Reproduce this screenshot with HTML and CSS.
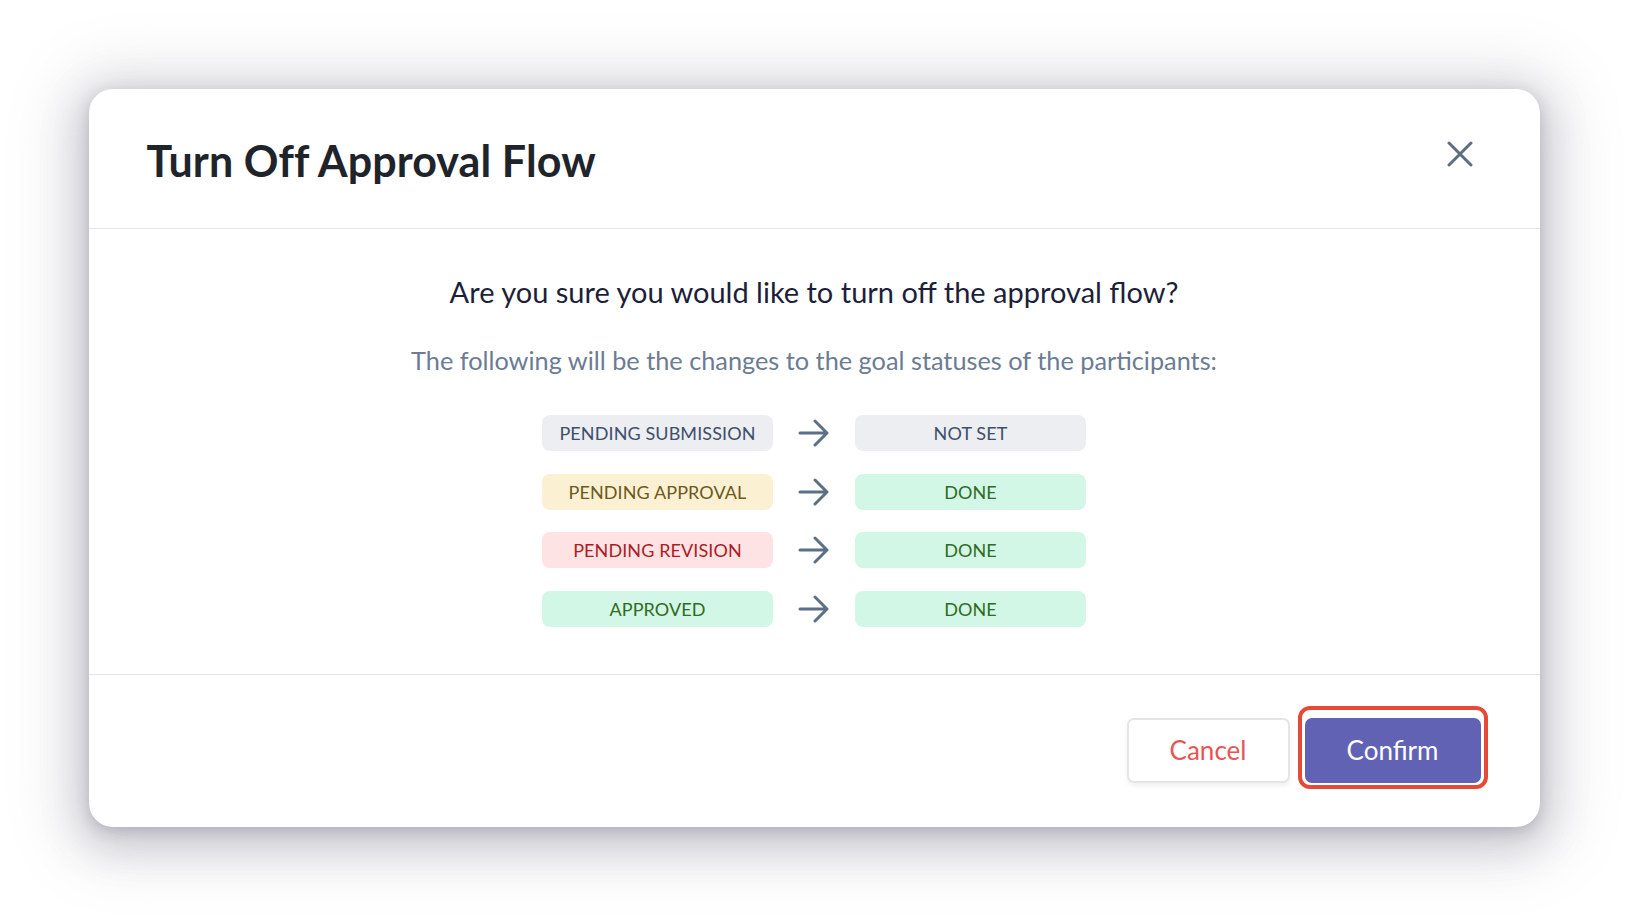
FILE: index.html
```html
<!DOCTYPE html>
<html lang="en">
<head>
<meta charset="utf-8">
<title>Turn Off Approval Flow</title>
<link rel="stylesheet" href="styles.css">
</head>
<body>
<div class="modal" role="dialog" aria-labelledby="modal-title">
  <header class="modal-header">
    <h1 id="modal-title" class="modal-title">Turn Off Approval Flow</h1>
    <button class="close-btn" aria-label="Close">
      <svg width="26" height="26" viewBox="0 0 26 26" aria-hidden="true">
        <path d="M2 2 L24 24 M24 2 L2 24" stroke="#5b6e82" stroke-width="3" stroke-linecap="round" fill="none"/>
      </svg>
    </button>
  </header>
  <section class="modal-body">
    <p class="question">Are you sure you would like to turn off the approval flow?</p>
    <p class="subtitle">The following will be the changes to the goal statuses of the participants:</p>
    <div class="changes">
      <div class="change-row">
        <span class="pill pill-grey">PENDING SUBMISSION</span>
        <svg class="arrow" width="32" height="28" viewBox="0 0 32 28" aria-hidden="true"><path d="M2 14 H29 M17 2 L29 14 L17 26" stroke="#5b6f87" stroke-width="3" stroke-linecap="round" stroke-linejoin="round" fill="none"/></svg>
        <span class="pill pill-grey">NOT SET</span>
      </div>
      <div class="change-row">
        <span class="pill pill-yellow">PENDING APPROVAL</span>
        <svg class="arrow" width="32" height="28" viewBox="0 0 32 28" aria-hidden="true"><path d="M2 14 H29 M17 2 L29 14 L17 26" stroke="#5b6f87" stroke-width="3" stroke-linecap="round" stroke-linejoin="round" fill="none"/></svg>
        <span class="pill pill-green">DONE</span>
      </div>
      <div class="change-row">
        <span class="pill pill-red">PENDING REVISION</span>
        <svg class="arrow" width="32" height="28" viewBox="0 0 32 28" aria-hidden="true"><path d="M2 14 H29 M17 2 L29 14 L17 26" stroke="#5b6f87" stroke-width="3" stroke-linecap="round" stroke-linejoin="round" fill="none"/></svg>
        <span class="pill pill-green">DONE</span>
      </div>
      <div class="change-row">
        <span class="pill pill-green">APPROVED</span>
        <svg class="arrow" width="32" height="28" viewBox="0 0 32 28" aria-hidden="true"><path d="M2 14 H29 M17 2 L29 14 L17 26" stroke="#5b6f87" stroke-width="3" stroke-linecap="round" stroke-linejoin="round" fill="none"/></svg>
        <span class="pill pill-green">DONE</span>
      </div>
    </div>
  </section>
  <footer class="modal-footer">
    <button class="btn btn-cancel">Cancel</button>
    <button class="btn btn-confirm">Confirm</button>
  </footer>
</div>
</body>
</html>
```

FILE: styles.css
```css
* { box-sizing: border-box; }

html, body {
  margin: 0;
  padding: 0;
  height: 100%;
  background: #ffffff;
}

body {
  display: flex;
  align-items: center;
  justify-content: center;
  font-family: "Lato", "Open Sans", "Liberation Sans", sans-serif;
}

.modal {
  width: 1451px;
  height: 738px;
  margin: 0 4px 4px 0;
  background: #ffffff;
  border-radius: 24px;
  display: flex;
  flex-direction: column;
  box-shadow:
    0 4px 14px rgba(70, 70, 90, 0.22),
    0 12px 40px 8px rgba(90, 90, 110, 0.22),
    0 6px 60px 26px rgba(120, 120, 140, 0.18);
}

.modal-header {
  display: flex;
  justify-content: space-between;
  align-items: flex-start;
  padding: 46px 67px 42px 58px;
  border-bottom: 1px solid #e2e5e9;
}

.modal-title {
  margin: 0;
  font-size: 43px;
  line-height: 1.2;
  font-weight: 700;
  color: #1f242b;
  letter-spacing: 0.1px;
}

.close-btn {
  margin-top: 6px;
  padding: 0;
  border: none;
  background: none;
  width: 26px;
  height: 26px;
  display: flex;
}

.modal-body {
  flex: 1;
  display: flex;
  flex-direction: column;
  align-items: center;
  padding-top: 46px;
  border-bottom: 1px solid #e2e5e9;
}

.question {
  margin: 0;
  font-size: 29px;
  line-height: 1.2;
  color: #1d1f3a;
}

.subtitle {
  margin: 35px 0 0;
  font-size: 25.3px;
  line-height: 1.2;
  color: #6b7c93;
}

.changes {
  margin-top: 40px;
  display: flex;
  flex-direction: column;
  gap: 22.5px;
}

.change-row {
  display: flex;
  align-items: center;
  gap: 25px;
}

.arrow { flex: none; }

.pill {
  width: 231px;
  height: 36px;
  border-radius: 8px;
  display: flex;
  align-items: center;
  justify-content: center;
  font-size: 18px;
  letter-spacing: 0.1px;
}

.pill-grey { background: #eceef2; color: #3e4f69; }
.pill-yellow { background: #fbf1d2; color: #6a5920; }
.pill-red { background: #fde3e4; color: #ad1b25; }
.pill-green { background: #d3f7e6; color: #2f6b22; }

.modal-footer {
  flex: none;
  display: flex;
  justify-content: flex-end;
  align-items: flex-start;
  gap: 15px;
  padding: 43px 59px 0 0;
  height: 152px;
}

.btn {
  height: 65px;
  border-radius: 7px;
  font-family: "Lato", "Open Sans", "Liberation Sans", sans-serif;
  font-size: 26px;
  cursor: pointer;
}

.btn-cancel {
  width: 163px;
  background: #ffffff;
  border: 2px solid #e3e5e9;
  color: #e65656;
  box-shadow: 0 3px 5px rgba(0, 0, 0, 0.06);
}

.btn-confirm {
  position: relative;
  width: 176px;
  background: #6262b5;
  border: none;
  color: #ffffff;
}

.btn-confirm::after {
  content: "";
  position: absolute;
  top: -12px;
  bottom: -6px;
  left: -7px;
  right: -7px;
  border: 4px solid #e44a36;
  border-radius: 12px;
  pointer-events: none;
}
```
